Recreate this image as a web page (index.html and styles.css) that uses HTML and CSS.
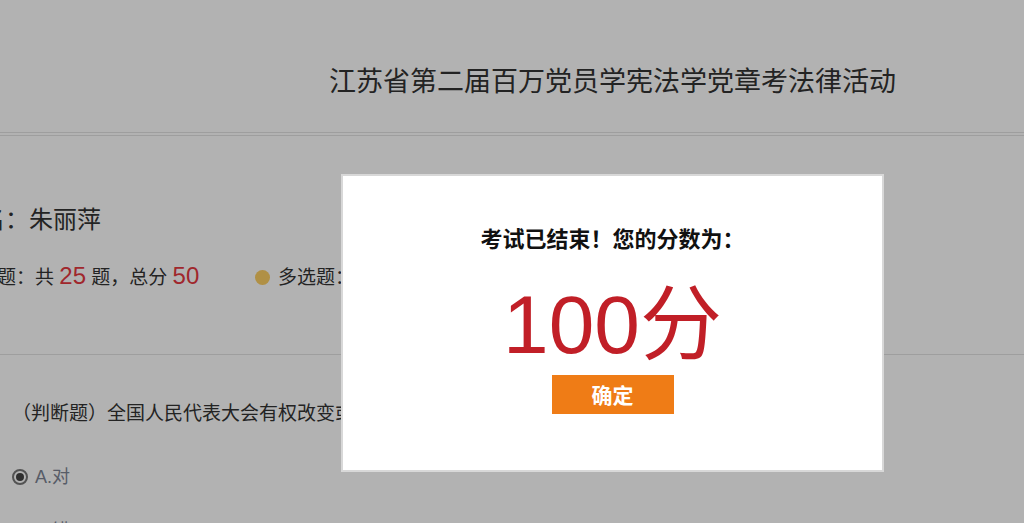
FILE: index.html
```html
<!DOCTYPE html>
<html lang="zh-CN">
<head>
    <meta charset="UTF-8">
    <meta name="viewport" content="width=device-width, initial-scale=1.0">
    <title>江苏省第二届百万党员学宪法学党章考法律活动</title>
    <link rel="stylesheet" href="styles.css">
</head>
<body>

    <div class="page">
        <div class="header">
            <h1>江苏省第二届百万党员学宪法学党章考法律活动</h1>
        </div>

        <div class="info">
            <div class="name">姓名：<span>朱丽萍</span></div>
            <div class="stats">
                <div class="stat"><span class="dot"></span>判断题：共 <em>25</em> 题，总分 <em>50</em></div>
                <div class="stat"><span class="dot"></span>多选题：共 <em>25</em> 题，总分 <em>50</em></div>
            </div>
        </div>

        <div class="question">
            <p class="q-title">（判断题）全国人民代表大会有权改变或者撤销全国人大常委会不适当的决定。</p>
            <div class="option first"><span class="radio checked"></span>A.对</div>
            <div class="option"><span class="radio"></span>B.错</div>
        </div>
    </div>

    <div class="mask"></div>

    <div class="dialog">
        <div class="dialog-title">考试已结束！您的分数为：</div>
        <div class="score">100分</div>
        <button type="button" class="ok">确定</button>
    </div>

</body>
</html>
```

FILE: styles.css
```css
html, body {
    margin: 0;
    overflow: hidden;
    height: 100%;
}
body {
    font-family: "Liberation Sans", "Noto Sans CJK SC", sans-serif;
    color: #333;
    background-color: #fff;
}
.page {
    width: 1225px;
}
.header {
    height: 133px;
    box-sizing: border-box;
    padding-top: 26px;
    display: flex;
    align-items: center;
    justify-content: center;
    border-bottom: 1px solid #e2e2e2;
}
.header h1 {
    margin: 0;
    font-family: "Noto Sans CJK SC", sans-serif;
    font-size: 27px;
    font-weight: normal;
    color: #333;
}
.info {
    margin-top: 2px;
    border-top: 1px solid #e2e2e2;
    border-bottom: 1px solid #e2e2e2;
    height: 220px;
    margin-left: -43px;
    padding-top: 66px;
    box-sizing: border-box;
}
.name {
    font-family: "Noto Sans CJK SC", sans-serif;
    font-size: 24px;
    line-height: 32px;
    color: #333;
}
.stats {
    display: flex;
    margin-top: 27px;
    margin-left: -21px;
}
.stat {
    width: 319px;
    flex-shrink: 0;
    font-size: 19px;
    line-height: 30px;
    color: #333;
    white-space: nowrap;
}
.stat em {
    font-style: normal;
    font-size: 24px;
    color: #e6383f;
}
.dot {
    display: inline-block;
    vertical-align: middle;
    width: 15px;
    height: 15px;
    border-radius: 50%;
    background-color: #fcce63;
    margin: -3px 8px 0 0;
}
.question {
    padding-left: 12px;
}
.q-title {
    margin: 0;
    padding-top: 46px;
    font-size: 19px;
    line-height: 26px;
    color: #333;
}
.option {
    display: flex;
    align-items: center;
    margin-top: 38px;
    font-size: 18px;
    line-height: 16px;
    color: #7d8494;
}
.option.first {
    margin-top: 42px;
}
.radio {
    width: 12px;
    height: 12px;
    border: 2px solid #777;
    border-radius: 50%;
    margin-right: 7px;
    position: relative;
}
.radio.checked::after {
    content: "";
    position: absolute;
    left: 2px;
    top: 2px;
    width: 8px;
    height: 8px;
    border-radius: 50%;
    background-color: #444;
}
.mask {
    position: fixed;
    left: 0;
    top: 0;
    right: 0;
    bottom: 0;
    background-color: rgba(0, 0, 0, 0.3);
}
.dialog {
    position: fixed;
    left: 341px;
    top: 174px;
    width: 543px;
    height: 298px;
    box-sizing: border-box;
    border: 2px solid #d8d8d8;
    background: white;
    display: flex;
    flex-direction: column;
    align-items: center;
    padding-top: 47px;
}
.dialog-title {
    font-family: "Noto Sans CJK SC", sans-serif;
    font-size: 22px;
    font-weight: bold;
    line-height: 28px;
    color: #111;
}
.score {
    margin-top: 33px;
    font-size: 82px;
    line-height: 82px;
    color: #c11f27;
}
.ok {
    margin-top: 9px;
    width: 122px;
    height: 39px;
    padding: 0;
    border: none;
    background-color: #ef7c16;
    color: white;
    font-family: "Noto Sans CJK SC", sans-serif;
    font-size: 21px;
    font-weight: bold;
    line-height: 39px;
    cursor: pointer;
}
```
